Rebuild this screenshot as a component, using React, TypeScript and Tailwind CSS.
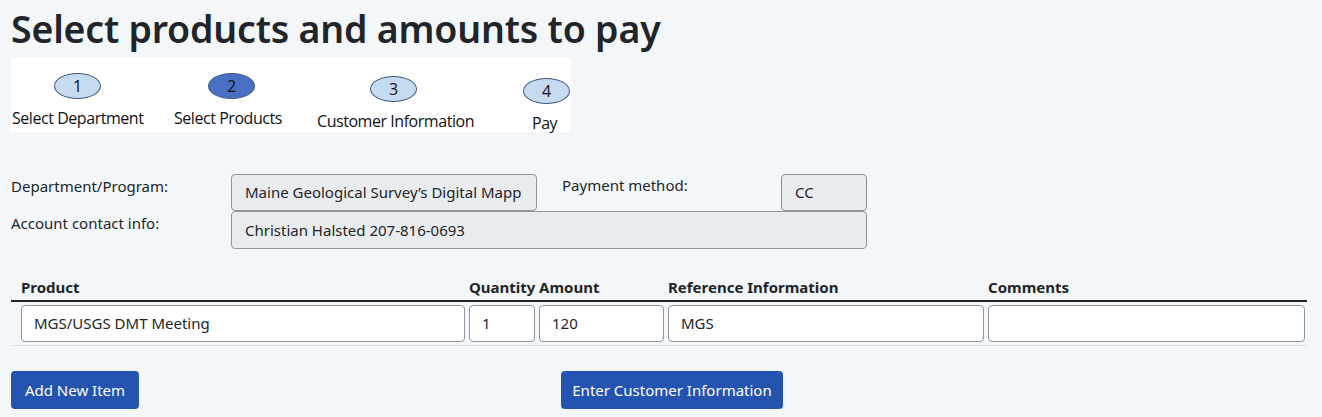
import React from 'react';

const steps = [
  { n: '1', label: 'Select Department', active: false, ox: 'ml-[43px]', oy: 'mt-[15px]', lx: 'ml-[1px]' },
  { n: '2', label: 'Select Products', active: true, ox: 'ml-[197px]', oy: 'mt-[15px]', lx: 'ml-[163px]' },
  { n: '3', label: 'Customer Information', active: false, ox: 'ml-[359px]', oy: 'mt-[18px]', lx: 'ml-[306px]' },
  { n: '4', label: 'Pay', active: false, ox: 'ml-[512px]', oy: 'mt-[20px]', lx: 'ml-[521px]' },
];

function StepBadge({ n, active }: { n: string; active: boolean }) {
  return (
    <div
      className={`flex h-[26px] w-[47px] items-center justify-center rounded-[50%] border border-[#41597f] text-[16px] leading-none text-[#111] ${
        active ? 'bg-[#4a70c6]' : 'bg-[#c6daf0]'
      }`}
    >
      {n}
    </div>
  );
}

function Field({ value, className }: { value: string; className: string }) {
  return (
    <div
      className={`flex items-center overflow-hidden whitespace-nowrap rounded-[4px] border border-[#8e959c] bg-[#e9ecef] px-[13px] text-[15px] text-[#212529] ${className}`}
    >
      {value}
    </div>
  );
}

function Cell({ value, className }: { value: string; className: string }) {
  return (
    <div
      className={`flex h-[37px] items-center rounded-[4px] border border-[#8e959c] bg-white px-[12px] text-[15px] text-[#212529] ${className}`}
    >
      {value}
    </div>
  );
}

export default function App() {
  return (
    <div
      className="min-h-[417px] bg-[#f4f7f9] px-[11px] pt-[4px] text-[#212529]"
      style={{ fontFamily: '"Noto Sans", "Open Sans", sans-serif' }}
    >
      <h1 className="text-[37.5px] font-semibold leading-[50px] tracking-[-0.2px] text-[#212529]">
        Select products and amounts to pay
      </h1>

      {/* progress image */}
      <div className="mt-[4px] grid h-[74px] w-[560px] bg-white" style={{ fontFamily: '"Open Sans", "Noto Sans", sans-serif' }}>
        {steps.map((s) => (
          <div key={s.n} className="col-start-1 row-start-1 flex flex-col">
            <div className={`${s.ox} ${s.oy}`}>
              <StepBadge n={s.n} active={s.active} />
            </div>
            <div className={`${s.lx} mt-[10px] text-[16px] leading-[19px] tracking-[-0.45px] text-[#111]`}>{s.label}</div>
          </div>
        ))}
      </div>

      {/* details */}
      <div className="mt-[42px] flex text-[15px]">
        <div className="w-[220px]">
          <div className="pt-[1px]">Department/Program:</div>
          <div className="pt-[14px]">Account contact info:</div>
        </div>
        <div className="flex flex-col">
          <div className="flex">
            <Field value="Maine Geological Survey’s Digital Mapp" className="h-[37px] w-[306px]" />
            <div className="w-[244px] pl-[25px]">Payment method:</div>
            <Field value="CC" className="h-[37px] w-[86px]" />
          </div>
          <Field value="Christian Halsted 207-816-0693" className="h-[38px] w-[636px]" />
        </div>
      </div>

      {/* products table */}
      <div className="mt-[28px] w-[1296px]">
        <div className="flex border-b-2 border-[#212529] pb-[3px] text-[15px] font-bold leading-[20px]">
          <div className="w-[458px] pl-[10px]">Product</div>
          <div className="w-[70px]">Quantity</div>
          <div className="w-[129px]">Amount</div>
          <div className="w-[320px]">Reference Information</div>
          <div className="flex-1">Comments</div>
        </div>
        <div className="flex gap-[4px] border-b border-[#dee2e6] pb-[3px] pl-[10px] pr-[2px] pt-[3px]">
          <Cell value="MGS/USGS DMT Meeting" className="w-[444px]" />
          <Cell value="1" className="w-[66px]" />
          <Cell value="120" className="w-[125px]" />
          <Cell value="MGS" className="w-[316px]" />
          <Cell value="" className="flex-1" />
        </div>
      </div>

      <div className="mt-[25px] flex">
        <button className="h-[38px] w-[128px] rounded-[4px] bg-[#2454b0] text-[15px] text-white">Add New Item</button>
        <button className="ml-[422px] h-[38px] w-[222px] rounded-[4px] bg-[#2454b0] text-[15px] text-white">
          Enter Customer Information
        </button>
      </div>
    </div>
  );
}
